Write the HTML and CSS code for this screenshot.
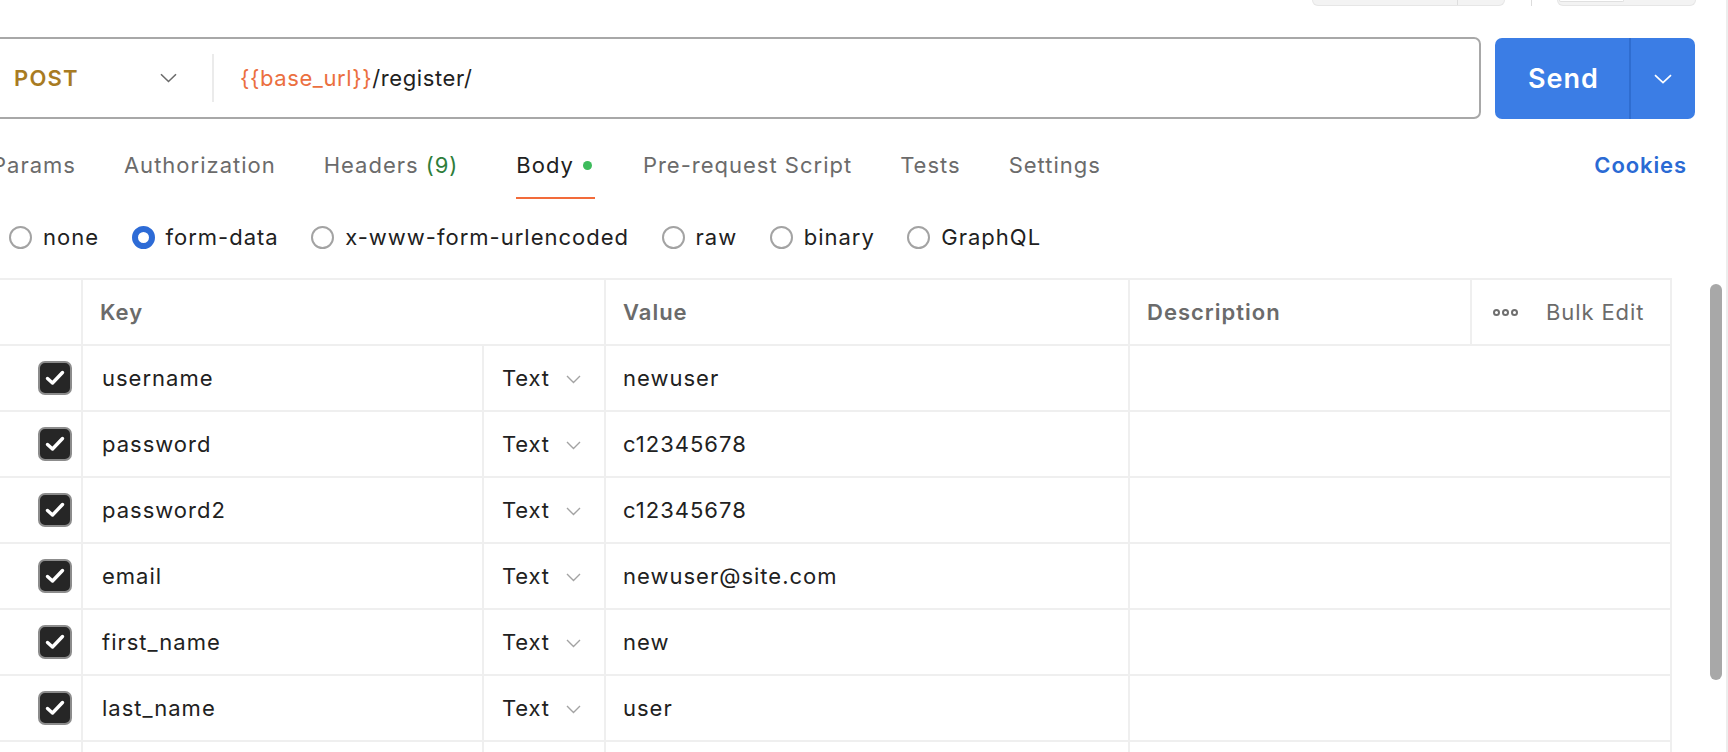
FILE: index.html
```html
<!DOCTYPE html>
<html lang="en">
<head>
<meta charset="utf-8">
<title>POST register</title>
<link rel="stylesheet" href="styles.css">
</head>
<body>
<div class="app">
  <div class="main">
    <div class="topstrip">
      <div class="tgroup tg1"><span class="tseg tseg-a"></span><span class="tseg tseg-b"></span></div>
      <span class="tline"></span>
      <div class="tgroup tg2"><span class="tinner"></span></div>
    </div>

    <div class="urlrow">
      <div class="urlbox">
        <div class="method">
          <span class="method-name">POST</span>
          <svg class="chev" width="17" height="10" viewBox="0 0 17 10"><path d="M1 1.2 L8.5 8.5 L16 1.2" fill="none" stroke="#6b6b6b" stroke-width="1.6"/></svg>
        </div>
        <div class="url"><span class="var">{{base_url}}</span>/register/</div>
      </div>
      <div class="send">
        <span class="send-main">Send</span>
        <span class="send-drop"><svg width="18" height="10" viewBox="0 0 18 10"><path d="M1 1.2 L9 8.6 L17 1.2" fill="none" stroke="#fff" stroke-width="1.7"/></svg></span>
      </div>
    </div>

    <div class="tabs">
      <span class="tab">Params</span>
      <span class="tab">Authorization</span>
      <span class="tab tab-headers">Headers <span class="count">(9)</span></span>
      <span class="tab active">Body<span class="dot"></span></span>
      <span class="tab">Pre-request Script</span>
      <span class="tab">Tests</span>
      <span class="tab">Settings</span>
      <span class="cookies">Cookies</span>
    </div>

    <div class="radios">
      <label class="radio"><span class="circle"></span>none</label>
      <label class="radio"><span class="circle on"></span>form-data</label>
      <label class="radio"><span class="circle"></span>x-www-form-urlencoded</label>
      <label class="radio"><span class="circle"></span>raw</label>
      <label class="radio"><span class="circle"></span>binary</label>
      <label class="radio"><span class="circle"></span>GraphQL</label>
    </div>

    <div class="table">
      <div class="row head">
        <div class="cell c-check"></div>
        <div class="cell c-keyspan th">Key</div>
        <div class="cell c-val th">Value</div>
        <div class="cell c-desc th">Description</div>
        <div class="cell c-bulk"><span class="dots"><i></i><i></i><i></i></span><span class="bulk">Bulk Edit</span></div>
      </div>

      <div class="row">
        <div class="cell c-check"><span class="cb"><svg width="20" height="16" viewBox="0 0 20 16"><path d="M2.5 8.5 L7.5 13 L17.5 2.5" fill="none" stroke="#fff" stroke-width="3.4" stroke-linecap="round" stroke-linejoin="round"/></svg></span></div>
        <div class="cell c-key">username</div>
        <div class="cell c-type">Text<svg class="tchev" width="15" height="9" viewBox="0 0 15 9"><path d="M1 1 L7.5 7.5 L14 1" fill="none" stroke="#a3a3a3" stroke-width="1.4"/></svg></div>
        <div class="cell c-val">newuser</div>
        <div class="cell c-descspan"></div>
      </div>
      <div class="row">
        <div class="cell c-check"><span class="cb"><svg width="20" height="16" viewBox="0 0 20 16"><path d="M2.5 8.5 L7.5 13 L17.5 2.5" fill="none" stroke="#fff" stroke-width="3.4" stroke-linecap="round" stroke-linejoin="round"/></svg></span></div>
        <div class="cell c-key">password</div>
        <div class="cell c-type">Text<svg class="tchev" width="15" height="9" viewBox="0 0 15 9"><path d="M1 1 L7.5 7.5 L14 1" fill="none" stroke="#a3a3a3" stroke-width="1.4"/></svg></div>
        <div class="cell c-val">c12345678</div>
        <div class="cell c-descspan"></div>
      </div>
      <div class="row">
        <div class="cell c-check"><span class="cb"><svg width="20" height="16" viewBox="0 0 20 16"><path d="M2.5 8.5 L7.5 13 L17.5 2.5" fill="none" stroke="#fff" stroke-width="3.4" stroke-linecap="round" stroke-linejoin="round"/></svg></span></div>
        <div class="cell c-key">password2</div>
        <div class="cell c-type">Text<svg class="tchev" width="15" height="9" viewBox="0 0 15 9"><path d="M1 1 L7.5 7.5 L14 1" fill="none" stroke="#a3a3a3" stroke-width="1.4"/></svg></div>
        <div class="cell c-val">c12345678</div>
        <div class="cell c-descspan"></div>
      </div>
      <div class="row">
        <div class="cell c-check"><span class="cb"><svg width="20" height="16" viewBox="0 0 20 16"><path d="M2.5 8.5 L7.5 13 L17.5 2.5" fill="none" stroke="#fff" stroke-width="3.4" stroke-linecap="round" stroke-linejoin="round"/></svg></span></div>
        <div class="cell c-key">email</div>
        <div class="cell c-type">Text<svg class="tchev" width="15" height="9" viewBox="0 0 15 9"><path d="M1 1 L7.5 7.5 L14 1" fill="none" stroke="#a3a3a3" stroke-width="1.4"/></svg></div>
        <div class="cell c-val">newuser@site.com</div>
        <div class="cell c-descspan"></div>
      </div>
      <div class="row">
        <div class="cell c-check"><span class="cb"><svg width="20" height="16" viewBox="0 0 20 16"><path d="M2.5 8.5 L7.5 13 L17.5 2.5" fill="none" stroke="#fff" stroke-width="3.4" stroke-linecap="round" stroke-linejoin="round"/></svg></span></div>
        <div class="cell c-key">first_name</div>
        <div class="cell c-type">Text<svg class="tchev" width="15" height="9" viewBox="0 0 15 9"><path d="M1 1 L7.5 7.5 L14 1" fill="none" stroke="#a3a3a3" stroke-width="1.4"/></svg></div>
        <div class="cell c-val">new</div>
        <div class="cell c-descspan"></div>
      </div>
      <div class="row">
        <div class="cell c-check"><span class="cb"><svg width="20" height="16" viewBox="0 0 20 16"><path d="M2.5 8.5 L7.5 13 L17.5 2.5" fill="none" stroke="#fff" stroke-width="3.4" stroke-linecap="round" stroke-linejoin="round"/></svg></span></div>
        <div class="cell c-key">last_name</div>
        <div class="cell c-type">Text<svg class="tchev" width="15" height="9" viewBox="0 0 15 9"><path d="M1 1 L7.5 7.5 L14 1" fill="none" stroke="#a3a3a3" stroke-width="1.4"/></svg></div>
        <div class="cell c-val">user</div>
        <div class="cell c-descspan"></div>
      </div>
      <div class="row">
        <div class="cell c-check"></div>
        <div class="cell c-key"></div>
        <div class="cell c-type"></div>
        <div class="cell c-val"></div>
        <div class="cell c-descspan"></div>
      </div>
    </div>
  </div>

  <div class="scrollbar"><div class="thumb"></div></div>
</div>
</body>
</html>
```

FILE: styles.css
```css
* { box-sizing: border-box; }

html, body {
  margin: 0;
  padding: 0;
  background: #ffffff;
  height: 752px;
  overflow: hidden;
}

body {
  font-family: "Inter", "Noto Sans", sans-serif;
  font-size: 22px;
  letter-spacing: 1px;
  color: #212121;
}

.app {
  position: relative;
  width: 1728px;
  height: 752px;
  border-right: 2px solid #ededed;
}

.main {
  margin-left: -24px;
  width: 1720px;
}

/* ---- top strip (cut-off toolbar) ---- */
.topstrip {
  height: 6px;
  display: flex;
  align-items: flex-start;
  padding-left: 1336px;
}
.tgroup {
  height: 6px;
  background: #f3f3f3;
  border: 1px solid #e6e6e6;
  border-top: none;
  border-radius: 0 0 6px 6px;
  display: flex;
}
.tg1 { width: 193px; }
.tseg-a { width: 145px; border-right: 1px solid #dedede; height: 100%; }
.tline {
  width: 1px;
  height: 6px;
  background: #dcdcdc;
  margin: 0 25px 0 26px;
}
.tg2 { width: 139px; }
.tinner {
  width: 65px;
  height: 2px;
  margin-left: 1px;
  background: #ffffff;
  border: 1px solid #e0e0e0;
  border-top: none;
  border-radius: 0 0 4px 4px;
}

/* ---- URL row ---- */
.urlrow {
  margin-top: 31px;
  display: flex;
  align-items: flex-start;
  gap: 14px;
}
.urlbox {
  width: 1505px;
  height: 82px;
  border: 2px solid #a8a8a8;
  border-radius: 0 7px 7px 0;
  display: flex;
  align-items: center;
}
.method {
  width: 236px;
  height: 48px;
  padding-left: 36px;
  padding-right: 35px;
  display: flex;
  align-items: center;
  justify-content: space-between;
  border-right: 2px solid #ebebeb;
}
.method-name {
  color: #a87b22;
  font-weight: 600;
  font-size: 22px;
  letter-spacing: 1.2px;
}
.url {
  padding-left: 26px;
  font-size: 22px;
  letter-spacing: 0.6px;
  color: #212121;
}
.var { color: #eb6f40; }

.send {
  margin-top: 1px;
  width: 200px;
  height: 81px;
  background: #3b7de5;
  border-radius: 7px;
  display: flex;
  color: #ffffff;
}
.send-main {
  width: 136px;
  display: flex;
  align-items: center;
  justify-content: center;
  font-weight: 600;
  font-size: 27px;
  letter-spacing: 1px;
  padding-left: 3px;
  border-right: 2px solid #2f6dd0;
}
.send-drop {
  flex: 1;
  display: flex;
  align-items: center;
  justify-content: center;
}

/* ---- tabs ---- */
.tabs {
  margin-top: 22px;
  display: flex;
  align-items: flex-start;
  gap: 48px;
  padding-left: 16px;
}
.tab {
  height: 58px;
  line-height: 48px;
  color: #6b6b6b;
  display: flex;
  align-items: flex-start;
  white-space: nowrap;
}
.tab .count { color: #2e7d3a; margin-left: 7px; }
.tab-headers { margin-right: 10px; }
.tab.active {
  color: #212121;
  border-bottom: 2px solid #f26b3a;
  padding-right: 3px;
}
.dot {
  width: 9px;
  height: 9px;
  border-radius: 50%;
  background: #3dbb5c;
  margin: 20px 0 0 9px;
}
.cookies {
  margin-left: auto;
  margin-right: 9px;
  line-height: 48px;
  color: #2a6ad4;
  font-weight: 600;
  letter-spacing: 0.9px;
}

/* ---- radios ---- */
.radios {
  margin-top: 16px;
  height: 44px;
  display: flex;
  align-items: center;
  gap: 32.5px;
  padding-left: 33px;
  letter-spacing: 1px;
}
.radio {
  display: flex;
  align-items: center;
  gap: 11px;
  color: #212121;
}
.circle {
  width: 23px;
  height: 23px;
  border-radius: 50%;
  border: 2px solid #a3a3a3;
  background: #fff;
}
.circle.on {
  border: 6px solid #2d6bd6;
}

/* ---- table ---- */
.table {
  margin-top: 19px;
  width: 1696px;
  border-top: 2px solid #efefef;
  border-right: 2px solid #efefef;
}
.row {
  display: grid;
  grid-template-columns: 107px 401px 122px 524px 342px 200px;
  height: 66px;
  border-bottom: 2px solid #efefef;
}
.cell {
  display: flex;
  align-items: center;
  border-right: 2px solid #efefef;
  white-space: nowrap;
}
.cell:last-child { border-right: none; }
.c-check { padding-left: 62px; }
.c-key { padding-left: 19px; }
.c-keyspan { padding-left: 17px; }
.c-val, .c-desc { padding-left: 17px; }
.c-keyspan { grid-column: 2 / 4; }
.c-descspan { grid-column: 5 / 7; }
.c-type { padding-left: 18px; color: #212121; letter-spacing: 0.8px; }
.tchev { margin-left: 16px; margin-top: 2px; }
.th {
  color: #6b6b6b;
  font-weight: 600;
}
.c-bulk {
  padding-left: 21px;
  color: #6b6b6b;
}
.dots { display: flex; gap: 2px; margin-right: 28px; }
.dots i {
  width: 7px;
  height: 7px;
  border-radius: 50%;
  border: 2px solid #6f6f6f;
}
.bulk { letter-spacing: 0.9px; }
.cb {
  width: 34px;
  height: 34px;
  border-radius: 7px;
  background: #262626;
  border: 2px solid #8c8c8c;
  display: flex;
  align-items: center;
  justify-content: center;
}

/* ---- scrollbar overlay ---- */
.scrollbar {
  position: absolute;
  top: 284px;
  left: 1710px;
  width: 12px;
  height: 396px;
}
.thumb {
  width: 12px;
  height: 396px;
  border-radius: 6px;
  background: #a8a8a8;
}
```
